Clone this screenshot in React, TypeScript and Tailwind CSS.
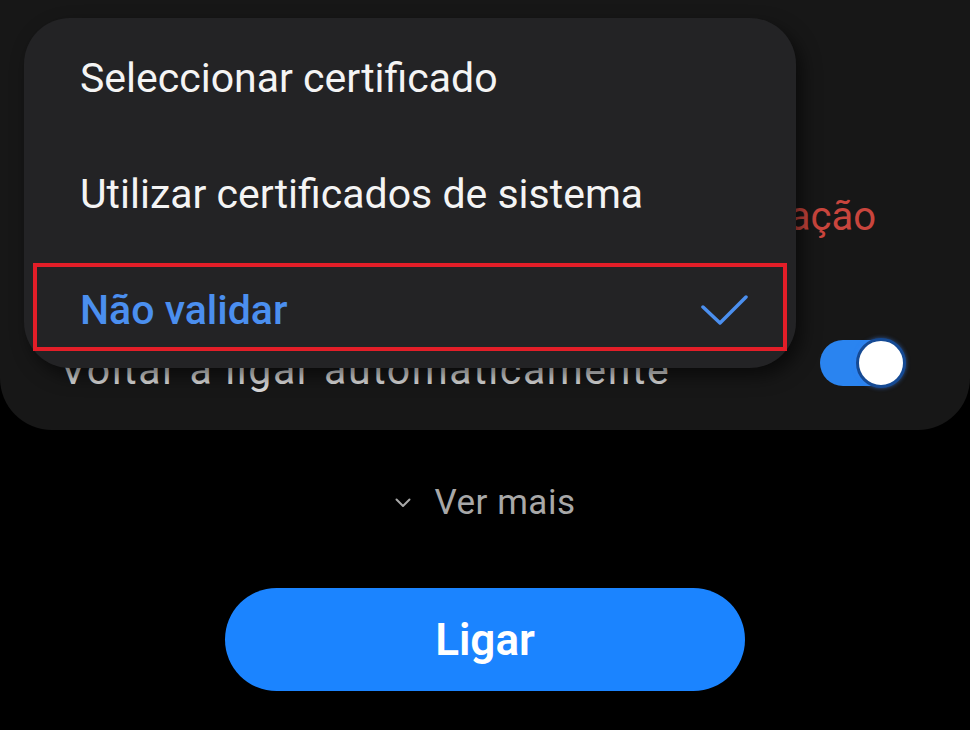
import React from "react";

export default function App() {
  return (
    <div
      className="w-[970px] h-[730px] bg-black overflow-hidden flex flex-col items-center"
      style={{ fontFamily: "Roboto, 'Noto Sans', sans-serif" }}
    >
      {/* Settings card */}
      <div className="relative w-full h-[430px] bg-[#171717] rounded-b-[52px] flex flex-col shrink-0">
        <div className="mt-[197px] pr-[94px] text-right text-[40px] leading-none text-[#c9453d]">
          ação
        </div>
        <div className="mt-[101px] flex items-start justify-between pl-[60px] pr-[64px]">
          <span className="mt-[12px] text-[41px] leading-none text-[#d9d9d9] tracking-[1.6px]">
            Voltar a ligar automaticamente
          </span>
          <div className="relative w-[86px] h-[50px]">
            <div className="absolute left-0 top-[2px] w-[76px] h-[46px] rounded-full bg-[#2a84f0]" />
            <div className="absolute right-0 top-0 w-[50px] h-[50px] rounded-full bg-white border-[3px] border-[#154a94] shadow-[0_0_4px_rgba(60,130,240,0.6)]" />
          </div>
        </div>

        {/* Dropdown menu */}
        <div className="absolute left-[24px] top-[18px] w-[772px] h-[350px] rounded-[46px] bg-[#232325] shadow-[6px_8px_18px_rgba(0,0,0,0.55)] flex flex-col overflow-hidden">
          <div className="h-[118px] pt-[3px] flex items-center pl-[56px] text-[41px] leading-none text-[#f4f4f4]">
            Seleccionar certificado
          </div>
          <div className="h-[117px] pt-[2px] flex items-center pl-[56px] text-[41px] leading-none text-[#f4f4f4]">
            Utilizar certificados de sistema
          </div>
          <div className="h-[117px] pt-[2px] flex items-center justify-between pl-[56px] pr-[48px]">
            <span className="text-[41px] leading-none font-medium text-[#4b8fef]">Não validar</span>
            <svg width="47" height="31" viewBox="0 0 47 31" fill="none">
              <path
                d="M2 12 L19 28 L45 2"
                stroke="#4b8fef"
                strokeWidth="3.5"
                strokeLinecap="round"
                strokeLinejoin="round"
              />
            </svg>
          </div>
        </div>

        {/* Annotation box */}
        <div className="absolute left-[33px] top-[263px] w-[754px] h-[88px] border-[4px] border-[#e31e28]" />
      </div>

      {/* Ver mais */}
      <div className="mt-[55px] flex items-center gap-[24px] text-[35px] leading-none text-[#a8a8a8]">
        <svg width="16" height="10" viewBox="0 0 16 10" fill="none">
          <path d="M1.5 1.5 L8 8 L14.5 1.5" stroke="#a8a8a8" strokeWidth="2" strokeLinecap="round" strokeLinejoin="round" />
        </svg>
        <span className="tracking-[0.5px]">Ver mais</span>
      </div>

      {/* Ligar button */}
      <button className="mt-[68px] w-[520px] h-[103px] rounded-full bg-[#1b84ff] text-white text-[44px] font-semibold leading-none flex items-center justify-center">
        Ligar
      </button>
    </div>
  );
}
